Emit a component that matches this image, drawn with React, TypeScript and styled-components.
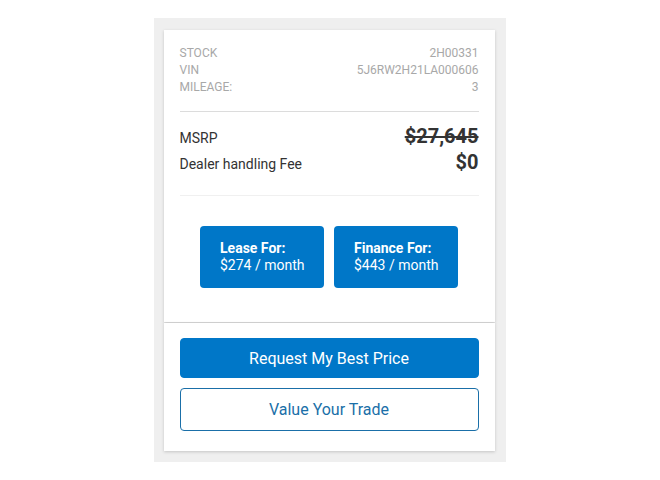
import styled, { createGlobalStyle } from "styled-components";

const Global = createGlobalStyle`
  body {
    margin: 0;
    background: #fff;
    font-family: Roboto, "Liberation Sans", Arial, sans-serif;
  }
`;

const Page = styled.div`
  display: flex;
  justify-content: center;
  padding-top: 18px;
  padding-right: 1px;
`;

const Panel = styled.div`
  width: 352px;
  background: #efefef;
  padding: 12px 11px 11px 10px;
  box-sizing: border-box;
  display: flex;
  flex-direction: column;
`;

const Card = styled.div`
  background: #fff;
  box-shadow: 0 1px 3px rgba(0, 0, 0, 0.18);
  padding: 0 16px;
`;

const Details = styled.div`
  padding: 15px 0 15px;
  border-bottom: 1px solid #dcdcdc;
`;

const InfoRow = styled.div`
  display: flex;
  justify-content: space-between;
  font-size: 12px;
  line-height: 17px;
  color: #a8a8a8;
  text-transform: uppercase;
`;

const Pricing = styled.div`
  padding: 11px 0 20px;
  border-bottom: 1px solid #f0f0f0;
`;

const PriceRow = styled.div`
  display: flex;
  justify-content: space-between;
  align-items: baseline;
  color: #333;
  height: 26px;
  line-height: 26px;
`;

const PriceLabel = styled.span`
  font-size: 14px;
`;

const PriceValue = styled.span<{ $struck?: boolean }>`
  font-size: 20px;
  font-weight: 700;
  line-height: 26px;
  text-decoration: ${(p) => (p.$struck ? "line-through" : "none")};
`;

const Offers = styled.div`
  display: flex;
  justify-content: center;
  gap: 10px;
  padding: 30px 0 34px;
`;

const OfferButton = styled.button`
  width: 124px;
  height: 62px;
  border: 0;
  border-radius: 4px;
  background: #0077c8;
  color: #fff;
  font-family: inherit;
  font-size: 14px;
  line-height: 17px;
  text-align: left;
  white-space: nowrap;
  padding: 0 0 0 20px;
  cursor: pointer;
  display: flex;
  flex-direction: column;
  justify-content: center;
`;

const OfferTitle = styled.strong`
  font-weight: 700;
`;

const Actions = styled(Card)`
  margin-top: 1px;
  padding: 15px 16px 20px;
  display: flex;
  flex-direction: column;
  gap: 10px;
`;

const ActionButton = styled.button<{ $outline?: boolean }>`
  height: ${(p) => (p.$outline ? "43px" : "40px")};
  border-radius: 4px;
  border: 1px solid ${(p) => (p.$outline ? "#1a6fa8" : "#0077c8")};
  background: ${(p) => (p.$outline ? "#fff" : "#0077c8")};
  color: ${(p) => (p.$outline ? "#1a6fa8" : "#fff")};
  font-family: inherit;
  font-size: 16px;
  cursor: pointer;
`;

export default function App() {
  return (
    <>
      <Global />
      <Page>
        <Panel>
          <Card>
            <Details>
              <InfoRow>
                <span>Stock</span>
                <span>2H00331</span>
              </InfoRow>
              <InfoRow>
                <span>VIN</span>
                <span>5J6RW2H21LA000606</span>
              </InfoRow>
              <InfoRow>
                <span>Mileage:</span>
                <span>3</span>
              </InfoRow>
            </Details>
            <Pricing>
              <PriceRow>
                <PriceLabel>MSRP</PriceLabel>
                <PriceValue $struck>$27,645</PriceValue>
              </PriceRow>
              <PriceRow>
                <PriceLabel>Dealer handling Fee</PriceLabel>
                <PriceValue>$0</PriceValue>
              </PriceRow>
            </Pricing>
            <Offers>
              <OfferButton>
                <OfferTitle>Lease For:</OfferTitle>
                <span>$274 / month</span>
              </OfferButton>
              <OfferButton>
                <OfferTitle>Finance For:</OfferTitle>
                <span>$443 / month</span>
              </OfferButton>
            </Offers>
          </Card>
          <Actions>
            <ActionButton>Request My Best Price</ActionButton>
            <ActionButton $outline>Value Your Trade</ActionButton>
          </Actions>
        </Panel>
      </Page>
    </>
  );
}
